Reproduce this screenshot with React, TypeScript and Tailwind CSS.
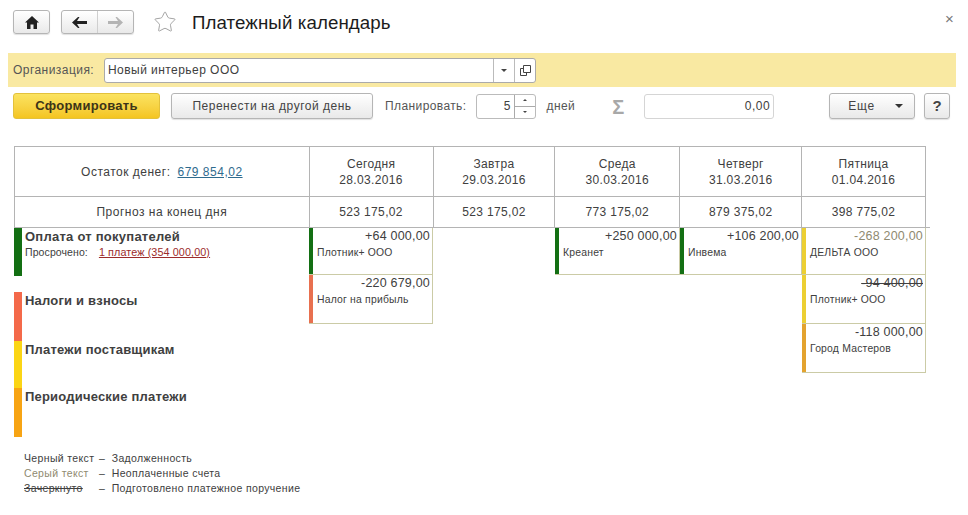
import { Star } from "lucide-react";

const btn = "flex items-center justify-center rounded-[3px] border border-[#b5b5b5] bg-gradient-to-b from-white to-[#e9e9e9] shadow-[0_1px_1px_rgba(0,0,0,0.12)]";

const days = [
  { name: "Сегодня", date: "28.03.2016", rest: "523 175,02", w: "w-[124px]" },
  { name: "Завтра", date: "29.03.2016", rest: "523 175,02", w: "w-[122px]" },
  { name: "Среда", date: "30.03.2016", rest: "773 175,02", w: "w-[125px]" },
  { name: "Четверг", date: "31.03.2016", rest: "879 375,02", w: "w-[122px]" },
  { name: "Пятница", date: "01.04.2016", rest: "398 775,02", w: "w-[124px]" },
];

type Pay = { sum: string; who: string; bar: string; h: string; sumCls?: string };

const payments: Pay[][] = [
  [
    { sum: "+64 000,00", who: "Плотник+ ООО", bar: "bg-[#136f13]", h: "h-[47px]" },
    { sum: "-220 679,00", who: "Налог на прибыль", bar: "bg-[#e8704f]", h: "h-[49px]" },
  ],
  [],
  [{ sum: "+250 000,00", who: "Креанет", bar: "bg-[#136f13]", h: "h-[47px]" }],
  [{ sum: "+106 200,00", who: "Инвема", bar: "bg-[#136f13]", h: "h-[47px]" }],
  [
    { sum: "-268 200,00", who: "ДЕЛЬТА ООО", bar: "bg-[#eccf33]", h: "h-[47px]", sumCls: "text-[#8f8a70]" },
    { sum: "-94 400,00", who: "Плотник+ ООО", bar: "bg-[#eccf33]", h: "h-[49px]", sumCls: "line-through" },
    { sum: "-118 000,00", who: "Город Мастеров", bar: "bg-[#e3a32f]", h: "h-[49px]" },
  ],
];

function Card({ p }: { p: Pay }) {
  return (
    <div className={`flex ${p.h} border-b border-r border-[#cbcba6]`}>
      <div className={`w-[4px] shrink-0 ${p.bar}`} />
      <div className="flex-1 min-w-0 pl-[4px] pr-[2px]">
        <div className={`text-right text-[12.5px] leading-[17px] tracking-[0.2px] ${p.sumCls ?? ""}`}>{p.sum}</div>
        <div className="mt-[1px] text-[10.4px] leading-[14px] tracking-[0.2px] whitespace-nowrap">{p.who}</div>
      </div>
    </div>
  );
}

export default function App() {
  return (
    <div className="relative w-[968px] h-[515px] overflow-hidden bg-white text-[#404040] font-['Liberation_Sans',Arial,sans-serif]">
      {/* Title bar */}
      <div className="flex items-center h-[24px] mt-[10px] ml-[13px]">
        <button className={`${btn} w-[37px] h-[24px]`}>
          <svg width="14" height="13" viewBox="0 0 14 13" fill="#222">
            <path d="M7 0 L14 6.5 L12 6.5 L12 13 L8.5 13 L8.5 8.5 L5.5 8.5 L5.5 13 L2 13 L2 6.5 L0 6.5 Z" />
          </svg>
        </button>
        <div className={`${btn} ml-[11px] w-[73px] h-[24px]`}>
          <div className="flex flex-1 h-full items-center justify-center border-r border-[#cfcfcf]">
            <svg width="15" height="11" viewBox="0 0 15 11" fill="#222">
              <path d="M6 0 L7.5 0 L5 4 L15 4 L15 7 L5 7 L7.5 11 L6 11 L0 5.5 Z" />
            </svg>
          </div>
          <div className="flex flex-1 h-full items-center justify-center">
            <svg width="15" height="11" viewBox="0 0 15 11" fill="#b4b4b4">
              <path d="M9 0 L7.5 0 L10 4 L0 4 L0 7 L10 7 L7.5 11 L9 11 L15 5.5 Z" />
            </svg>
          </div>
        </div>
        <Star className="ml-[19px] w-[24px] h-[24px] text-[#9a9a9a]" strokeWidth={0.9} />
        <h1 className="ml-[15px] pt-[2px] text-[18.7px] leading-[24px] tracking-[0.1px] text-[#1c1c1c]">Платежный календарь</h1>
        <span className="absolute left-[945px] top-[12px] text-[15px] leading-[14px] text-[#777]">×</span>
      </div>

      {/* Organization bar */}
      <div className="flex items-center h-[34px] mt-[19px] ml-[8px] w-[948px] bg-[#f9e9a2] pl-[5px]">
        <span className="w-[91px] text-[12px] tracking-[0.45px] text-[#555]">Организация:</span>
        <div className="flex items-stretch w-[432px] h-[25px] rounded-[3px] border border-[#aaa] bg-white">
          <span className="flex-1 pl-[3px] text-[12px] leading-[23px] tracking-[0.45px]">Новый интерьер ООО</span>
          <span className="flex w-[21px] items-center justify-center border-l border-[#bbb]">
            <span className="w-0 h-0 border-x-[3px] border-t-[3px] border-x-transparent border-t-[#444]" />
          </span>
          <span className="flex w-[21px] items-center justify-center border-l border-[#bbb]">
            <svg width="11" height="11" viewBox="0 0 11 11" fill="none" stroke="#444">
              <path d="M3.5 .5 H10.5 V7.5 H3.5 Z" />
              <path d="M3.5 3.5 H.5 V10.5 H6.5 V7.5" />
            </svg>
          </span>
        </div>
      </div>

      {/* Command bar */}
      <div className="flex items-center h-[26px] mt-[6px] ml-[13px]">
        <button className="w-[147px] h-[26px] rounded-[3px] border border-[#e3c13c] bg-gradient-to-b from-[#fbe35f] to-[#f4c51f] text-[13px] font-bold tracking-[0.3px] text-[#3d3418]">
          Сформировать
        </button>
        <button className={`${btn} ml-[11px] w-[202px] h-[26px] text-[12px] tracking-[0.5px] text-[#444]`}>Перенести на другой день</button>
        <span className="ml-[12px] text-[12px] tracking-[0.4px] text-[#555]">Планировать:</span>
        <div className="flex ml-[9px] w-[60px] h-[25px] rounded-[3px] border border-[#bbb] bg-white">
          <span className="flex-1 pr-[3px] text-right text-[12px] leading-[23px]">5</span>
          <div className="flex flex-col w-[21px] border-l border-[#aaa]">
            <span className="flex flex-1 items-center justify-center border-b border-[#aaa]">
              <span className="w-0 h-0 border-x-[2px] border-b-[2px] border-x-transparent border-b-[#444]" />
            </span>
            <span className="flex flex-1 items-center justify-center">
              <span className="w-0 h-0 border-x-[2px] border-t-[2px] border-x-transparent border-t-[#444]" />
            </span>
          </div>
        </div>
        <span className="ml-[11px] text-[12px] tracking-[0.4px] text-[#555]">дней</span>
        <span className="ml-[37px] w-[14px] pt-[2px] text-[20px] leading-[20px] font-bold text-[#a8a8a8]">Σ</span>
        <div className="ml-[18px] w-[130px] h-[25px] rounded-[3px] border border-[#d5d5d5] bg-white pr-[3px] text-right text-[12px] leading-[23px] tracking-[0.5px]">0,00</div>
        <button className={`${btn} ml-[55px] w-[86px] h-[26px] text-[12px] tracking-[0.8px] text-[#444]`}>
          <span className="w-[54px] pl-[7px] text-left">Еще</span>
          <span className="w-0 h-0 border-x-[4px] border-t-[4px] border-x-transparent border-t-[#333]" />
        </button>
        <button className={`${btn} ml-[9px] w-[26px] h-[26px] text-[15px] font-bold text-[#444]`}>?</button>
      </div>

      {/* Calendar table */}
      <div className="mt-[27px] ml-[14px] w-[912px] border-l border-t border-r border-[#b4b4b4] text-[12px] tracking-[0.35px]">
        <div className="flex h-[50px] border-b border-[#b4b4b4]">
          <div className="flex w-[294px] items-center justify-center gap-[7px] tracking-[0.5px]">
            <span>Остаток денег:</span>
            <a className="text-[#2f6b8e] underline">679 854,02</a>
          </div>
          {days.map((d) => (
            <div key={d.date} className={`${d.w} flex flex-col items-center justify-center border-l border-[#b4b4b4] leading-[16px]`}>
              <span>{d.name}</span>
              <span>{d.date}</span>
            </div>
          ))}
        </div>
        <div className="flex h-[30px]">
          <div className="flex w-[294px] items-center justify-center tracking-[0.5px]">Прогноз на конец дня</div>
          {days.map((d) => (
            <div key={d.date} className={`${d.w} flex items-center justify-center border-l border-[#b4b4b4]`}>{d.rest}</div>
          ))}
        </div>
      </div>

      {/* Body */}
      <div className="flex ml-[14px] w-[916px] border-t border-[#b4b4b4]">
        <div className="w-[295px] shrink-0">
          <div className="flex h-[48px] mb-[16px]">
            <div className="w-[8px] bg-[#136f13]" />
            <div className="pl-[3px]">
              <div className="text-[13px] leading-[17px] font-bold tracking-[0.25px]">Оплата от покупателей</div>
              <div className="mt-[1px] text-[10.5px] leading-[13px] tracking-[0.1px]">
                Просрочено:
                <a className="ml-[11px] text-[10.8px] text-[#9c2b2b] underline">1 платеж (354 000,00)</a>
              </div>
            </div>
          </div>
          <div className="flex h-[49px]">
            <div className="w-[8px] bg-[#f4694a]" />
            <div className="pl-[3px] text-[13px] leading-[17px] font-bold tracking-[0.2px]">Налоги и взносы</div>
          </div>
          <div className="flex h-[47px]">
            <div className="w-[8px] bg-[#fbd515]" />
            <div className="pl-[3px] text-[13px] leading-[17px] font-bold tracking-[0.2px]">Платежи поставщикам</div>
          </div>
          <div className="flex h-[49px]">
            <div className="w-[8px] bg-[#f7a414]" />
            <div className="pl-[3px] text-[13px] leading-[17px] font-bold tracking-[0.2px]">Периодические платежи</div>
          </div>
        </div>
        {days.map((d, i) => (
          <div key={d.date} className={`${d.w} shrink-0`}>
            {payments[i].map((p) => (
              <Card key={p.sum} p={p} />
            ))}
          </div>
        ))}
      </div>

      {/* Legend */}
      <div className="mt-[14px] ml-[24px] text-[10.5px] leading-[15px] tracking-[0.35px]">
        <div className="flex">
          <span className="w-[75px]">Черный текст</span>
          <span>–&nbsp;&nbsp;Задолженность</span>
        </div>
        <div className="flex">
          <span className="w-[75px] text-[#8f8a70]">Серый текст</span>
          <span>–&nbsp;&nbsp;Неоплаченные счета</span>
        </div>
        <div className="flex">
          <span className="w-[75px] line-through">Зачеркнуто</span>
          <span>–&nbsp;&nbsp;Подготовлено платежное поручение</span>
        </div>
      </div>
    </div>
  );
}
